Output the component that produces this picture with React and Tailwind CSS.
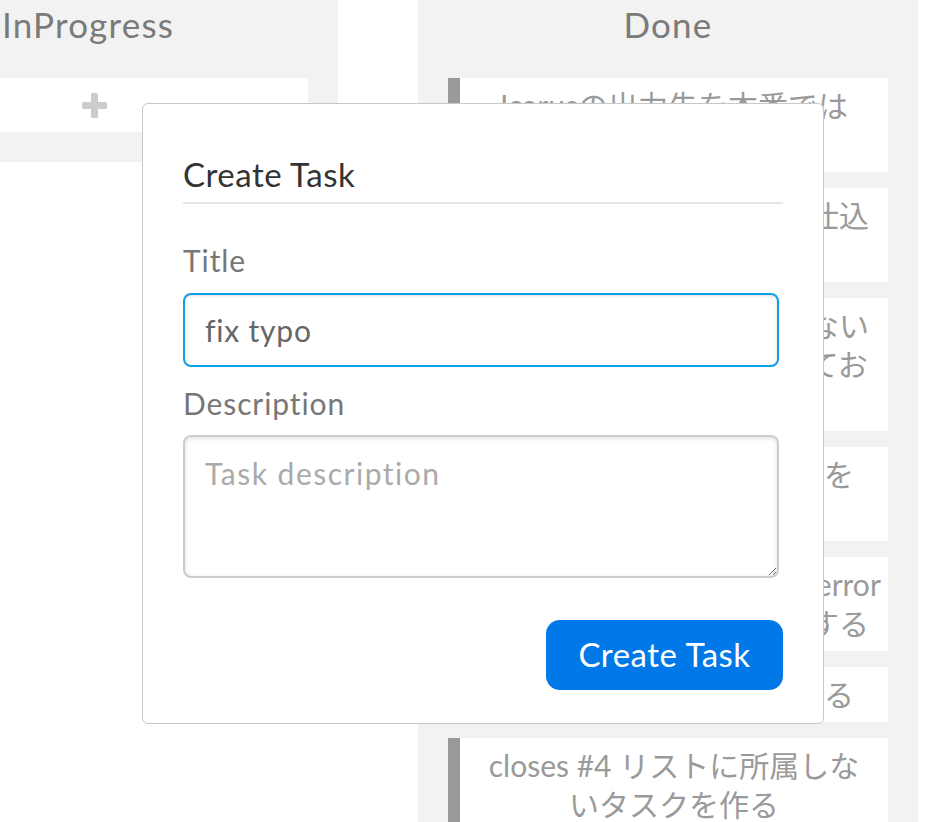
import React from "react";

const cards = [
  ["Icarusの出力先を本番では", "stdoutにする"],
  ["本番用の設定ファイルを仕込", "む"],
  ["完了したタスクは表示しない", "ようにフィルタを追加してお", "く"],
  ["ドラッグ中のカードの影を", "薄くする"],
  ["通信に失敗したらconsole.error", "でエラー内容をログ出力する"],
  ["カードの並び順を保存する"],
  ["closes #4 リストに所属しな", "いタスクを作る"],
];

function Card({ lines }) {
  return (
    <div className="border-l-[12px] border-[#999] bg-white px-2 py-2 text-center text-[30px] leading-[39px] text-[#9a9a9a]">
      {lines.map((l, i) => (
        <div key={i} className="whitespace-nowrap">
          {l}
        </div>
      ))}
    </div>
  );
}

export default function App() {
  return (
    <div className="relative h-[822px] w-[952px] overflow-hidden bg-white font-[Lato,'Noto_Sans_CJK_JP',sans-serif]">
      <div className="ml-[-162px] flex h-full items-start gap-[80px]">
        {/* InProgress column */}
        <div className="w-[500px] shrink-0 bg-[#f2f2f2] px-[30px] pb-[30px]">
          <div className="h-[78px] text-center text-[35px] leading-[48px] tracking-[1.2px] text-[#7a7a7a]">
            InProgress
          </div>
          <div className="flex h-[54px] items-center justify-center bg-white pl-[12px]">
            <svg width="25" height="25" viewBox="0 0 25 25">
              <rect x="9" y="0" width="7" height="25" rx="1.5" fill="#cccccc" />
              <rect x="0" y="9" width="25" height="7" rx="1.5" fill="#cccccc" />
            </svg>
          </div>
        </div>

        {/* Done column */}
        <div className="w-[500px] shrink-0 self-stretch overflow-hidden bg-[#f2f2f2] px-[30px]">
          <div className="h-[78px] text-center text-[35px] leading-[48px] tracking-[1.2px] text-[#7a7a7a]">
            Done
          </div>
          <div className="flex flex-col gap-4">
            {cards.map((c, i) => (
              <Card key={i} lines={c} />
            ))}
          </div>
        </div>
      </div>

      {/* Modal */}
      <div className="absolute left-[142px] top-[103px] flex h-[621px] w-[682px] flex-col rounded-[6px] border-[1.5px] border-[#c8c8c8] bg-white px-[40px]">
        <h2 className="mt-[50px] h-[40px] text-[33px] leading-[40px] tracking-[0.5px] text-[#333]">
          Create Task
        </h2>
        <div className="mt-[8px] h-[2px] w-full bg-[#e5e5e5]" />
        <label className="mt-[38px] text-[30px] leading-[36px] tracking-[0.9px] text-[#777]">
          Title
        </label>
        <input
          className="mt-[15px] h-[74px] w-[596px] rounded-[8px] border-2 border-[#129fea] px-[20px] text-[30px] tracking-[0.8px] text-[#666] shadow-[inset_0_1px_3px_#ddd] outline-none"
          defaultValue="fix typo"
        />
        <label className="mt-[18px] text-[30px] leading-[36px] tracking-[0.9px] text-[#777]">
          Description
        </label>
        <textarea
          className="mt-[14px] h-[143px] w-[596px] rounded-[8px] border-2 border-[#ccc] px-[20px] pt-[18px] text-[30px] leading-[36px] tracking-[1.5px] text-[#666] shadow-[inset_0_1px_4px_#ddd] outline-none placeholder:text-[#aaa]"
          placeholder="Task description"
        />
        <div className="mt-[42px] flex justify-end">
          <button className="h-[70px] w-[237px] rounded-[14px] bg-[#0078e7] text-[33px] tracking-[0.5px] text-white">
            Create Task
          </button>
        </div>
      </div>
    </div>
  );
}
